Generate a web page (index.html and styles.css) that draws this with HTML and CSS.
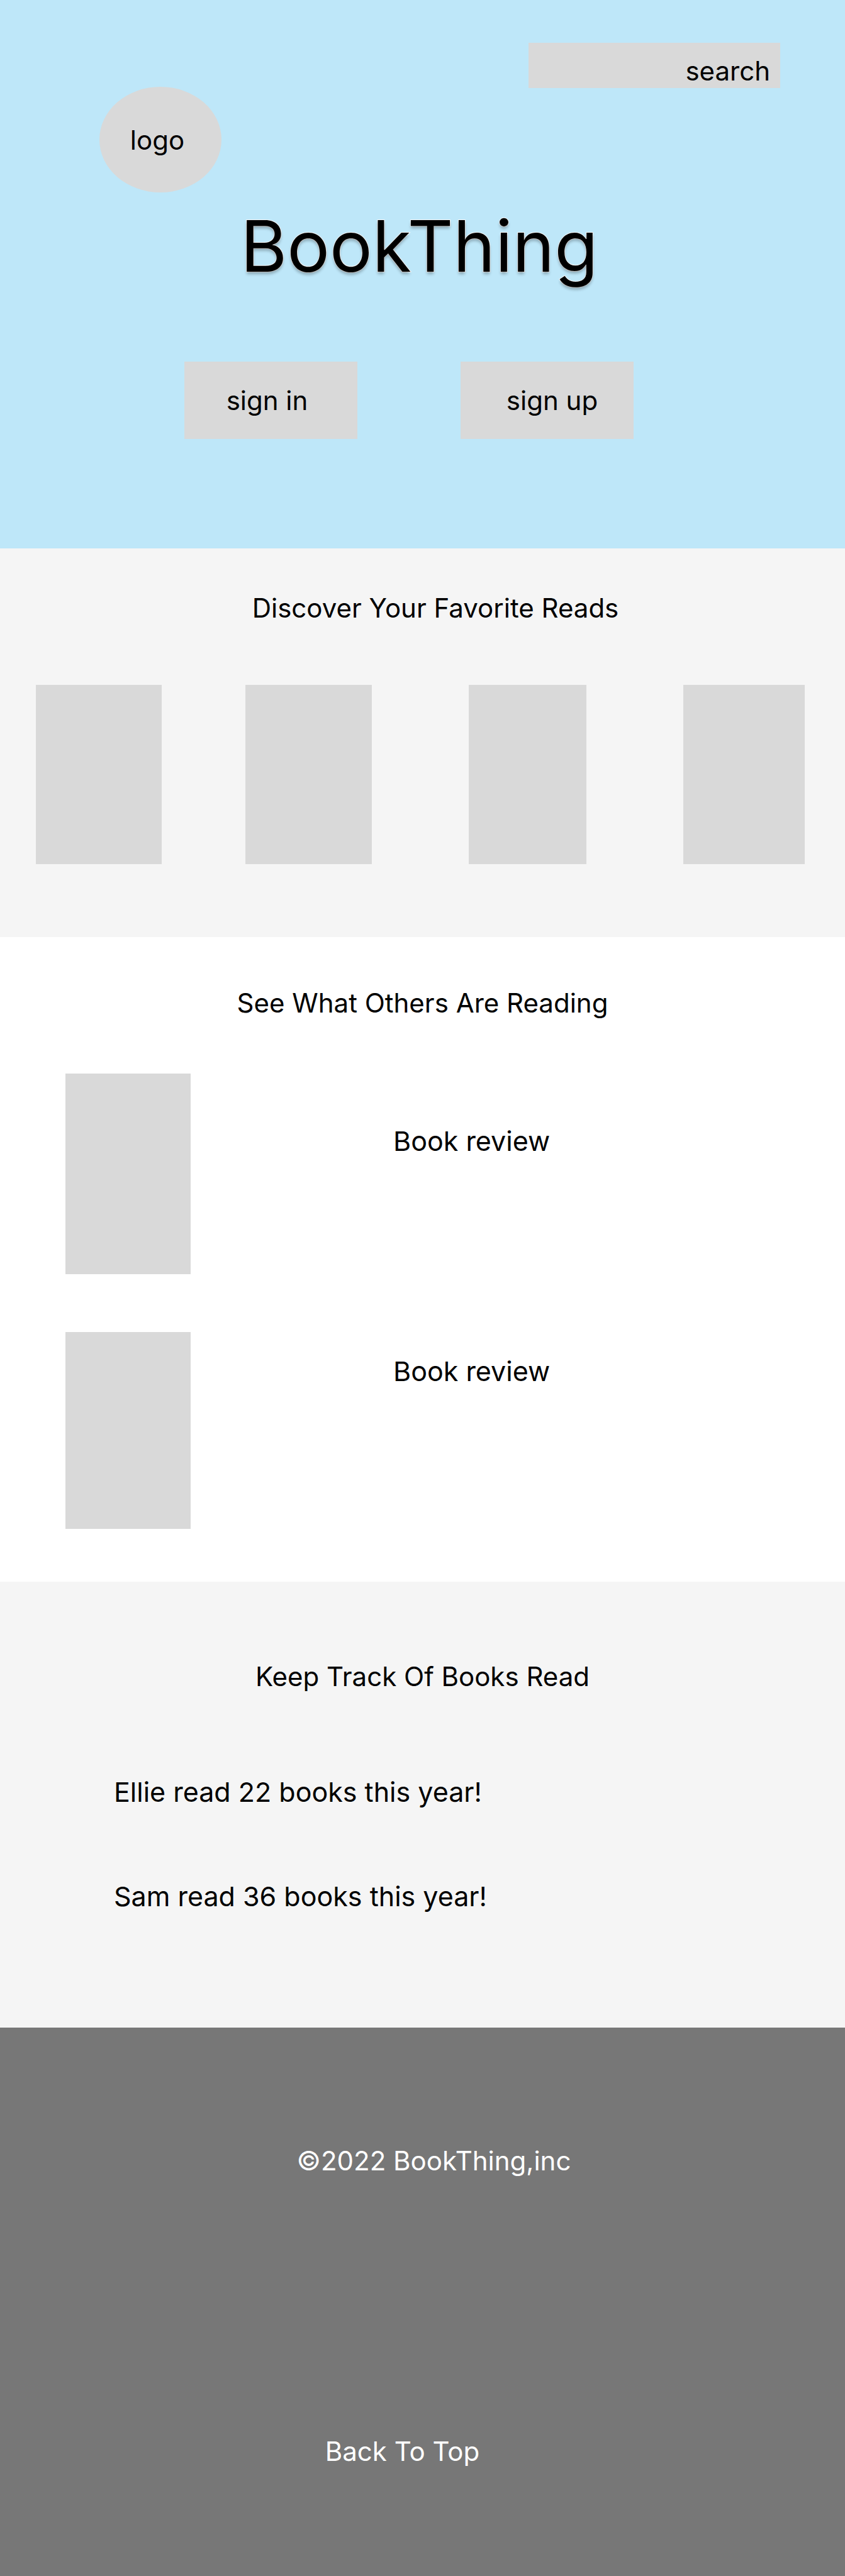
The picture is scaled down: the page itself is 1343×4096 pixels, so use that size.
FILE: index.html
```
<!DOCTYPE html>
<html lang="en">
<head>
<meta charset="utf-8">
<meta name="viewport" content="width=device-width, initial-scale=1">
<title>BookThing</title>
<link rel="stylesheet" href="styles.css">
</head>
<body>
<header class="hero" id="top">
  <div class="hero-bar">
    <div class="logo">logo</div>
    <form class="search" role="search">
      <input class="search-input" type="text" name="q" placeholder="search" aria-label="search">
    </form>
  </div>
  <h1 class="title">BookThing</h1>
  <div class="actions">
    <button class="button button-in" type="button">sign in</button>
    <button class="button button-up" type="button">sign up</button>
  </div>
</header>
<main>
  <section class="discover">
    <h2 class="heading">Discover Your Favorite Reads</h2>
    <ul class="shelf">
      <li class="cover"></li>
      <li class="cover"></li>
      <li class="cover"></li>
      <li class="cover"></li>
    </ul>
  </section>
  <section class="reviews">
    <h2 class="heading">See What Others Are Reading</h2>
    <article class="review review-first">
      <div class="cover"></div>
      <p class="text">Book review</p>
    </article>
    <article class="review review-second">
      <div class="cover"></div>
      <p class="text">Book review</p>
    </article>
  </section>
  <section class="track">
    <h2 class="heading">Keep Track Of Books Read</h2>
    <ul class="tally">
      <li>Ellie read 22 books this year!</li>
      <li>Sam read 36 books this year!</li>
    </ul>
  </section>
</main>
<footer class="footer">
  <p class="copyright">©2022 BookThing,inc</p>
  <a class="back" href="#top">Back To Top</a>
</footer>
</body>
</html>
```

FILE: styles.css
```
* {
  box-sizing: border-box;
}

body {
  margin: 0;
  background: #fff;
  color: #000;
  font-family: Inter, "Liberation Sans", sans-serif;
  font-size: 42px;
  line-height: 52px;
}

h1, h2, p, ul {
  margin: 0;
  padding: 0;
  font-weight: 400;
}

ul {
  list-style: none;
}

/* Header */
.hero {
  padding: 68px 0 174px;
  background: #bee7f9;
}

.hero-bar {
  display: flex;
  justify-content: space-between;
  align-items: flex-start;
  padding: 0 103px 0 158px;
}

.logo {
  display: flex;
  align-items: center;
  justify-content: center;
  width: 194px;
  height: 168px;
  margin-top: 70px;
  padding: 2px 10px 0 0;
  border-radius: 50%;
  background: #d9d9d9;
}

.search-input {
  display: block;
  width: 400px;
  height: 72px;
  padding: 18px 16px 2px;
  border: 0;
  border-radius: 0;
  background: #d9d9d9;
  color: #000;
  font: inherit;
  text-align: right;
}

.search-input::placeholder {
  color: #000;
  opacity: 1;
}

.title {
  margin-top: 16px;
  padding-right: 10px;
  font-size: 113px;
  line-height: 138px;
  text-align: center;
  text-shadow: 0 4px 4px rgba(0, 0, 0, 0.25);
  -webkit-text-stroke: 2px #f4f4f4;
  paint-order: stroke fill;
}

.actions {
  display: flex;
  justify-content: center;
  gap: 164px;
  margin-top: 115px;
  padding-right: 43px;
}

.button {
  width: 275px;
  height: 123px;
  padding: 0;
  border: 0;
  background: #d9d9d9;
  color: #000;
  font: inherit;
}

.button-in {
  padding-right: 12px;
}

.button-up {
  padding-left: 16px;
}

/* Sections */
.heading {
  font-size: 42px;
  text-align: center;
}

.cover {
  background: #d9d9d9;
}

.discover {
  padding: 69px 0 116px;
  background: #f5f5f5;
}

.discover .heading {
  padding-left: 41px;
}

.shelf {
  display: grid;
  grid-template-columns: 200fr 133fr 201fr 154fr 187fr 154fr 193fr;
  margin-top: 96px;
  padding: 0 64px 0 57px;
}

.shelf .cover {
  height: 285px;
}

.shelf .cover:nth-child(2) {
  grid-column: 3;
}

.shelf .cover:nth-child(3) {
  grid-column: 5;
}

.shelf .cover:nth-child(4) {
  grid-column: 7;
}

.reviews {
  padding: 79px 0 84px;
}

.review {
  display: grid;
  grid-template-columns: 199px 1fr;
  column-gap: 322px;
  padding: 0 104px;
  font-size: 43px;
}

.review-first {
  min-height: 319px;
  margin-top: 86px;
}

.review-second {
  min-height: 313px;
  margin-top: 92px;
}

.review-first .text {
  padding-top: 81px;
}

.review-second .text {
  padding-top: 36px;
}

.track {
  padding: 125px 0 183px;
  background: #f5f5f5;
}

.tally {
  display: grid;
  gap: 114px;
  margin-top: 131px;
  padding: 0 181px;
  font-size: 43px;
}

/* Footer */
.footer {
  display: flex;
  flex-direction: column;
  align-items: center;
  gap: 410px;
  padding: 186px 0 172px;
  background: #777;
  color: #fff;
}

.copyright {
  padding-left: 36px;
}

.back {
  padding-right: 64px;
  color: inherit;
  text-decoration: none;
}
```
